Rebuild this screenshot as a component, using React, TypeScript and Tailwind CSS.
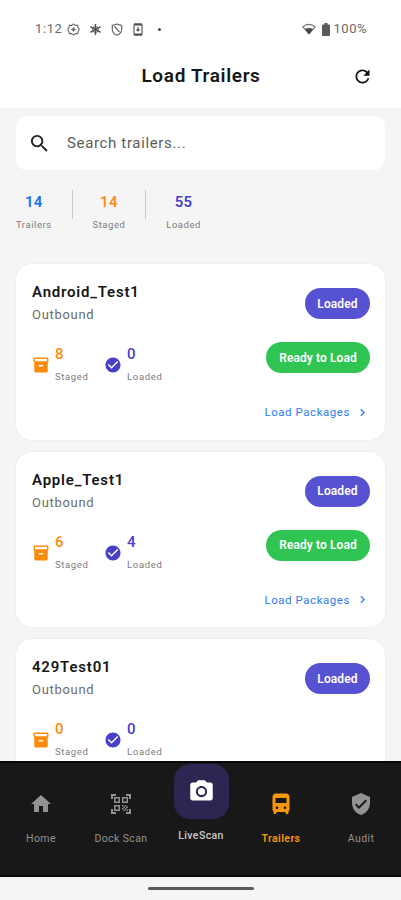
import { FC } from 'react';
import type { IconType } from 'react-icons';
import {
  MdCameraAlt,
  MdCheckCircle,
  MdChevronRight,
  MdHome,
  MdInventory2,
  MdQrCodeScanner,
  MdRefresh,
  MdSearch,
  MdVerifiedUser,
} from 'react-icons/md';

type Trailer = {
  name: string;
  direction: string;
  staged: number;
  loaded: number;
};

const trailers: Trailer[] = [
  { name: 'Android_Test1', direction: 'Outbound', staged: 8, loaded: 0 },
  { name: 'Apple_Test1', direction: 'Outbound', staged: 6, loaded: 4 },
  { name: '429Test01', direction: 'Outbound', staged: 0, loaded: 0 },
];

const BusIcon: FC<{ className?: string }> = ({ className }) => (
  <svg className={className} viewBox="0 0 24 24" fill="currentColor">
    <path
      fillRule="evenodd"
      d="M7 1.500h10q3.500 0 3.500 4V17q0 1.500-1 2.500V21q0 1-1 1h-1q-1 0-1-1v-1h-9v1q0 1-1 1h-1q-1 0-1-1v-1.500q-1-1-1-2.500V5.500q0-4 3.500-4zM6.500 6v5h11V6zM8 14.500a1.300 1.300 0 1 0 0 2.600 1.300 1.300 0 0 0 0-2.600zM16 14.500a1.300 1.300 0 1 0 0 2.600 1.300 1.300 0 0 0 0-2.600z"
    />
  </svg>
);

const StatusBar: FC = () => (
  <div className="flex h-[58px] items-center justify-between pl-[35px] pr-[34px] text-[13px] text-[#6a6a6a]">
    <div className="flex items-center">
      <span className="w-[32px] tracking-[0.6px]">1:12</span>
      <svg
        className="h-[13px] w-[13px]"
        viewBox="0 0 14 14"
        fill="none"
        stroke="currentColor"
        strokeWidth="1.2"
      >
        <path d="M7 1l2 1.500h2.500l.5 2.500 1.200 2-1.200 2-.5 2.500H9L7 13l-2-1.500H2.500L2 9 .8 7 2 5l.5-2.500H5z" />
        <path d="M7 4.500v5M4.500 7h5" />
        <circle cx="7" cy="7" r="1" fill="currentColor" />
      </svg>
      <svg
        className="ml-[9px] h-[13px] w-[13px]"
        viewBox="0 0 14 14"
        fill="none"
        stroke="#505050"
        strokeWidth="1.5"
      >
        <path d="M7 1v12M1.500 4l11 6M12.500 4l-11 6" />
        <circle cx="7" cy="7" r="3.200" strokeWidth="1" />
      </svg>
      <svg
        className="ml-[9px] h-[13px] w-[12px]"
        viewBox="0 0 12 13"
        fill="none"
        stroke="currentColor"
        strokeWidth="1.2"
      >
        <path d="M1.300 2.300C3 2.200 4.500 1.700 6 1c1.500.7 3 1.200 4.700 1.300v4c0 3-2 5-4.700 6-2.700-1-4.700-3-4.700-6zM3.500 3.500l5 5.500" />
      </svg>
      <svg
        className="ml-[10px] h-[13px] w-[10px]"
        viewBox="0 0 10 13"
        fill="none"
        stroke="#505050"
        strokeWidth="1.1"
      >
        <rect x="1" y="1" width="8" height="11" rx="1" />
        <path d="M1 1.500h8M1 11.500h8" strokeWidth="1.800" />
        <path d="M5 4v4M3.500 6.500L5 8l1.500-1.500" />
      </svg>
      <span className="ml-[15px] h-[3px] w-[3px] rounded-full bg-[#444]" />
    </div>
    <div className="flex items-center">
      <svg className="h-[12px] w-[14px]" viewBox="0 0 14 12">
        <path
          d="M.8 3.800C4.500.5 9.500.5 13.200 3.800L7 11z"
          fill="none"
          stroke="#6a6a6a"
          strokeWidth="1.100"
        />
        <path d="M3 6c2.500-1.300 5.500-1.300 8 0l-4 5.200z" fill="#4a4a4a" />
      </svg>
      <svg className="ml-[6px] h-[13px] w-[8px]" viewBox="0 0 8 13">
        <path
          d="M2.500 0h3v1.500H7q1 0 1 1V12q0 1-1 1H1q-1 0-1-1V2.500q0-1 1-1h1.500z"
          fill="#5a5a5a"
        />
      </svg>
      <span className="ml-[4px] tracking-[0.5px]">100%</span>
    </div>
  </div>
);

const Header: FC = () => (
  <header className="flex h-[50px] items-center pb-[13px] pl-[50px] pr-[28px]">
    <h1 className="flex-1 text-center text-[19px] font-semibold tracking-[0.65px] text-[#161616]">
      Load Trailers
    </h1>
    <button type="button" aria-label="Refresh">
      <MdRefresh className="h-[21px] w-[21px] text-[#111]" />
    </button>
  </header>
);

const SummaryItem: FC<{ value: number; label: string; color: string }> = ({
  value,
  label,
  color,
}) => (
  <div className="flex flex-col items-center">
    <span
      className={`text-[15px] font-semibold leading-[20px] tracking-[0.3px] ${color}`}
    >
      {value}
    </span>
    <span className="mt-[6px] text-[9.5px] leading-[14px] tracking-[0.55px] text-[#7c7c7c]">
      {label}
    </span>
  </div>
);

const Count: FC<{
  icon: IconType;
  value: number;
  label: string;
  color: string;
}> = ({ icon: Icon, value, label, color }) => (
  <div className={`flex items-center ${color}`}>
    <Icon className="mt-[2px] h-[18px] w-[18px]" />
    <div className="ml-[5px] flex flex-col">
      <span className="text-[15px] font-medium leading-[20px]">{value}</span>
      <span className="mt-[6px] text-[9.5px] leading-[14px] tracking-[0.65px] text-[#7c7c7c]">
        {label}
      </span>
    </div>
  </div>
);

const TrailerCard: FC<{ trailer: Trailer }> = ({ trailer }) => (
  <article className="h-[175.5px] shrink-0 rounded-[16px] bg-white pl-[16px] pr-[15px] pt-[17px] shadow-[0_0_3px_rgba(0,0,0,0.06)]">
    <div className="flex items-start justify-between">
      <div>
        <h2 className="text-[15px] font-semibold leading-[22px] tracking-[0.8px] text-[#161616]">
          {trailer.name}
        </h2>
        <p className="mt-[2px] text-[13px] leading-[20px] tracking-[0.7px] text-[#6c6c6c]">
          {trailer.direction}
        </p>
      </div>
      <span className="mt-[7px] flex h-[31px] w-[65px] items-center justify-center rounded-full bg-[#5752d1] text-[12px] font-semibold tracking-[0.1px] text-white">
        Loaded
      </span>
    </div>
    <div className="mt-[17px] flex h-[42px] items-start justify-between">
      <div className="mt-[2px] flex gap-[15.5px]">
        <Count
          icon={MdInventory2}
          value={trailer.staged}
          label="Staged"
          color="text-[#fb8c0a]"
        />
        <Count
          icon={MdCheckCircle}
          value={trailer.loaded}
          label="Loaded"
          color="text-[#4840c8]"
        />
      </div>
      {trailer.staged > 0 && (
        <span className="flex h-[31px] w-[104px] items-center justify-center rounded-full bg-[#30c553] text-[12px] font-semibold tracking-[0.1px] text-white">
          Ready to Load
        </span>
      )}
    </div>
    {trailer.staged > 0 && (
      <button
        type="button"
        className="ml-auto mt-[18px] flex items-center text-[11.5px] leading-[20px] tracking-[0.55px] text-[#2f7cf0]"
      >
        Load Packages
        <MdChevronRight className="ml-[5px] h-[15px] w-[15px]" />
      </button>
    )}
  </article>
);

const NavItem: FC<{
  icon: FC<{ className?: string }>;
  label: string;
  active?: boolean;
}> = ({ icon: Icon, label, active }) => (
  <div
    className={`flex flex-1 flex-col items-center pt-[29px] ${
      active ? 'font-semibold text-[#f89609]' : 'text-[#929292]'
    }`}
  >
    <Icon className="h-[24px] w-[24px]" />
    <span className="mt-[16px] text-[10.5px] leading-[14px] tracking-[0.4px]">
      {label}
    </span>
  </div>
);

const BottomNav: FC = () => (
  <nav className="flex h-[116px] shrink-0 border-y-2 border-[#080808] bg-[#181818] pl-px">
    <NavItem icon={MdHome} label="Home" />
    <NavItem icon={MdQrCodeScanner} label="Dock Scan" />
    <div className="flex flex-1 flex-col items-center pt-[1px] text-[#c9c9c9]">
      <div className="flex h-[55px] w-[55px] items-center justify-center rounded-[16px] bg-[#2c2752]">
        <MdCameraAlt className="h-[27px] w-[27px] text-white" />
      </div>
      <span className="mt-[10px] text-[10.5px] font-medium leading-[14px] tracking-[0.4px]">
        LiveScan
      </span>
    </div>
    <NavItem icon={BusIcon} label="Trailers" active />
    <NavItem icon={MdVerifiedUser} label="Audit" />
  </nav>
);

export default function App() {
  return (
    <div className="flex h-[900px] w-[401px] flex-col overflow-hidden bg-[#f5f5f5] font-[Roboto,sans-serif]">
      <div className="shrink-0 bg-white">
        <StatusBar />
        <Header />
      </div>
      <main className="flex min-h-0 flex-1 flex-col overflow-hidden px-[16px] pt-[8px]">
        <div className="flex h-[54px] shrink-0 items-center rounded-[10px] bg-white pl-[12px]">
          <MdSearch className="h-[23px] w-[23px] text-[#222]" />
          <span className="ml-[16px] text-[15px] tracking-[0.65px] text-[#5c5c5c]">
            Search trailers...
          </span>
        </div>
        <div className="mt-[20px] flex h-[74px] shrink-0 items-start">
          <div className="flex w-[185px] justify-between pt-[2px]">
            <SummaryItem value={14} label="Trailers" color="text-[#1473ec]" />
            <span className="-mt-[2px] h-[29px] w-px bg-[#c8c8c8]" />
            <SummaryItem value={14} label="Staged" color="text-[#fb8c1c]" />
            <span className="-mt-[2px] h-[29px] w-px bg-[#c8c8c8]" />
            <SummaryItem value={55} label="Loaded" color="text-[#4840c8]" />
          </div>
        </div>
        <div className="flex flex-col gap-[12px]">
          {trailers.map((trailer) => (
            <TrailerCard key={trailer.name} trailer={trailer} />
          ))}
        </div>
      </main>
      <BottomNav />
      <div className="flex h-[23px] shrink-0 justify-center pt-[10px]">
        <span className="h-[3px] w-[106px] rounded-full bg-[#5a5a5a]" />
      </div>
    </div>
  );
}
